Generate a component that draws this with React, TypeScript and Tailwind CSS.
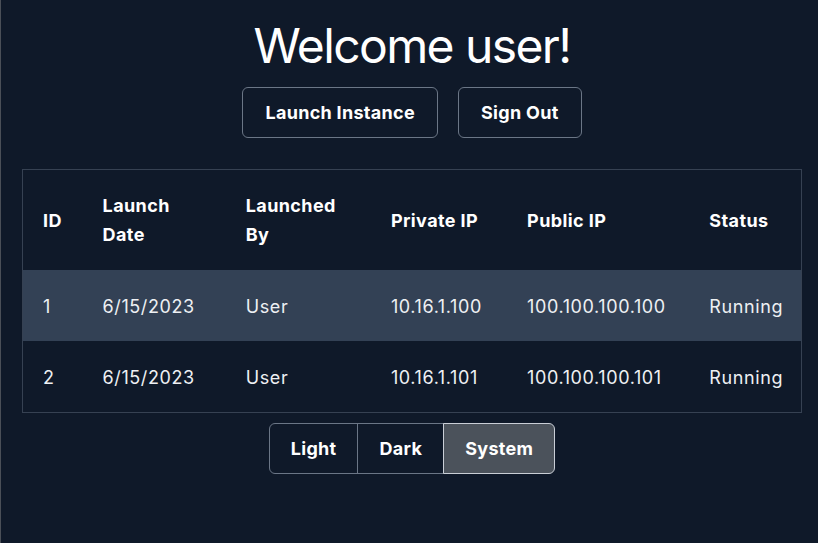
import { useState } from 'react'

type Instance = {
  id: number
  launchDate: string
  launchedBy: string
  privateIp: string
  publicIp: string
  status: string
}

const instances: Instance[] = [
  { id: 1, launchDate: '6/15/2023', launchedBy: 'User', privateIp: '10.16.1.100', publicIp: '100.100.100.100', status: 'Running' },
  { id: 2, launchDate: '6/15/2023', launchedBy: 'User', privateIp: '10.16.1.101', publicIp: '100.100.100.101', status: 'Running' },
]

const themes = ['Light', 'Dark', 'System']

export default function App() {
  const [theme, setTheme] = useState('System')

  return (
    <div
      className="min-h-screen bg-[#0f1929] border-l border-[#4a4f57] pl-[21px] pr-[16px] pt-[22px] flex flex-col items-center text-white"
      style={{ fontFamily: 'Inter, "Noto Sans", sans-serif' }}
    >
      <h1 className="text-[48px] leading-none tracking-[-1.6px]">Welcome user!</h1>

      {/* Кнопки */}
      <div className="flex gap-5 mt-[17px]">
        <button className="px-[22px] py-3 text-[18px] leading-[25px] font-bold tracking-[0.3px] border border-[#6b7686] rounded-md">
          Launch Instance
        </button>
        <button className="px-[22px] py-3 text-[18px] leading-[25px] font-bold tracking-[0.3px] border border-[#6b7686] rounded-md">
          Sign Out
        </button>
      </div>

      {/* Таблица инстансов */}
      <table className="w-full mt-[31px] table-fixed border border-[#364152] border-collapse text-[18px] leading-[29px] text-left">
        <colgroup>
          <col className="w-[60px]" />
          <col className="w-[143px]" />
          <col className="w-[145px]" />
          <col className="w-[136px]" />
          <col className="w-[182px]" />
          <col className="w-[112px]" />
        </colgroup>
        <thead className="tracking-[0.4px]">
          <tr>
            <th className="px-5 py-[21px] font-bold">ID</th>
            <th className="px-5 py-[21px] font-bold">Launch Date</th>
            <th className="px-5 py-[21px] font-bold">Launched By</th>
            <th className="px-5 py-[21px] font-bold">Private IP</th>
            <th className="px-5 py-[21px] font-bold">Public IP</th>
            <th className="px-5 py-[21px] font-bold">Status</th>
          </tr>
        </thead>
        <tbody className="text-[#eef0f3] tracking-[0.6px]">
          {instances.map((inst, i) => (
            <tr key={inst.id} className={i % 2 === 0 ? 'bg-[#334155]' : ''}>
              <td className="px-5 pt-[22px] pb-[20px]">{inst.id}</td>
              <td className="px-5 pt-[22px] pb-[20px]">{inst.launchDate}</td>
              <td className="px-5 pt-[22px] pb-[20px]">{inst.launchedBy}</td>
              <td className="px-5 pt-[22px] pb-[20px]">{inst.privateIp}</td>
              <td className="px-5 pt-[22px] pb-[20px]">{inst.publicIp}</td>
              <td className="px-5 pt-[22px] pb-[20px] whitespace-nowrap">{inst.status}</td>
            </tr>
          ))}
        </tbody>
      </table>

      {/* Переключатель темы */}
      <div className="flex mt-[10px]">
        {themes.map((t, i) => (
          <button
            key={t}
            onClick={() => setTheme(t)}
            className={
              'px-[21px] py-3 text-[18px] leading-[25px] font-bold tracking-[0.3px] border ' +
              (i === 0 ? 'rounded-l-md ' : '') +
              (i === themes.length - 1 ? 'rounded-r-md ' : '') +
              (i > 0 ? '-ml-px ' : '') +
              (theme === t ? 'bg-[#4b525b] border-[#c9ced6] z-10' : 'border-[#6b7686]')
            }
          >
            {t}
          </button>
        ))}
      </div>
    </div>
  )
}
